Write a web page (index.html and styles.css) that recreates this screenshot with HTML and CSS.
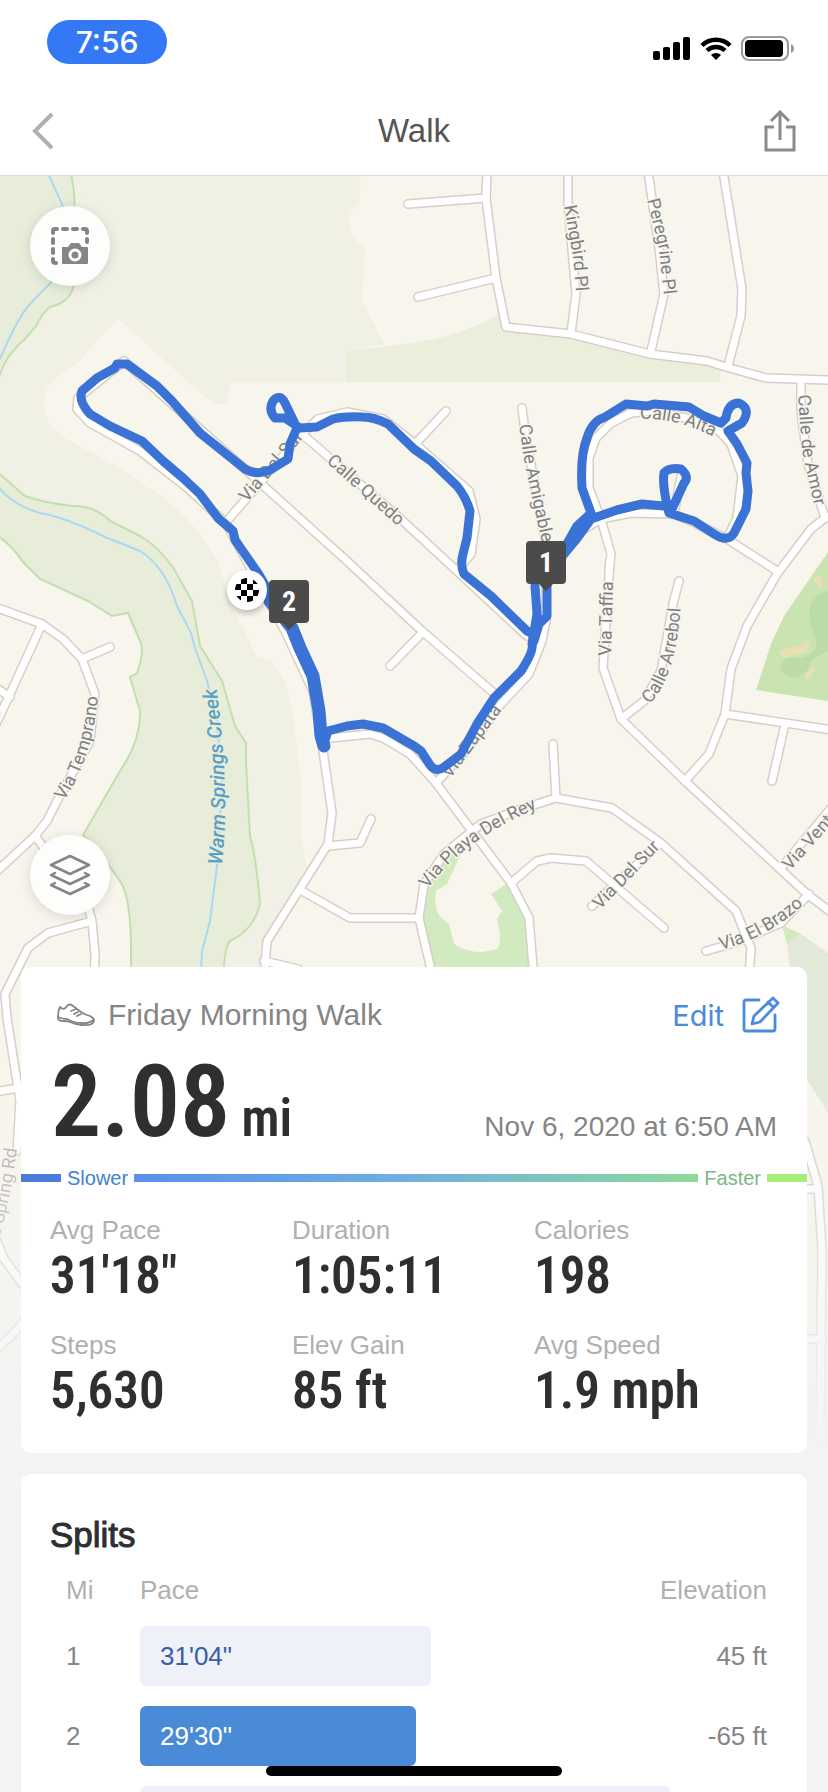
FILE: index.html
```html
<!DOCTYPE html>
<html lang="en">
<head>
  <meta charset="UTF-8" />
  <meta name="viewport" content="width=device-width, initial-scale=1" />
  <title>Walk</title>
  <link rel="stylesheet" href="styles.css">
</head>
<body>
  <div class="screen">
    <header class="topbar">
      <div class="status">
        <span class="clock">7:56</span>
        <div class="status-icons">
          <svg width="38" height="24" viewBox="0 0 38 24">
            <rect x="0" y="14" width="7" height="9" rx="2" />
            <rect x="10" y="10" width="7" height="13" rx="2" />
            <rect x="20" y="5" width="7" height="18" rx="2" />
            <rect x="30" y="0" width="7" height="23" rx="2" />
          </svg>
          <svg width="32" height="24" viewBox="0 0 32 24">
            <path d="M16 23l-5-5a7 7 0 0 1 10 0z" />
            <path d="M7 13.500a13 13 0 0 1 18 0M2 8.500a20 20 0 0 1 28 0" fill="none" stroke="#000" stroke-width="4.500" />
          </svg>
          <svg width="54" height="26" viewBox="0 0 54 26">
            <rect x="1" y="1" width="46" height="23" rx="7" fill="none" stroke="#999" stroke-width="2" />
            <rect x="4" y="4" width="38" height="17" rx="4" />
            <path d="M50 8c4 1 4 8 0 9z" fill="#999" />
          </svg>
        </div>
      </div>
      <nav class="nav">
        <button class="icon-btn" type="button" aria-label="Back">
          <svg width="22" height="38" viewBox="0 0 22 38"><path d="M20 2L3 19l17 17" fill="none" stroke="#b0b0b0" stroke-width="4" /></svg>
        </button>
        <h1>Walk</h1>
        <button class="icon-btn share" type="button" aria-label="Share">
          <svg width="32" height="42" viewBox="0 0 32 42"><path d="M10 17H2v23h28V17h-8M16 30V3M7 11l9-9 9 9" fill="none" stroke="#8a8a8a" stroke-width="3" /></svg>
        </button>
      </nav>
    </header>

    <main class="content">
      <!-- map runs on behind the first card and fades into the page -->
      <svg class="map" viewBox="0 175 828 1300" preserveAspectRatio="xMidYMin slice" aria-label="Route map">
        <defs>
          <linearGradient id="fade" x1="0" y1="0" x2="0" y2="1">
            <stop offset="0" stop-color="#f3f3f3" stop-opacity="0" />
            <stop offset="1" stop-color="#f3f3f3" />
          </linearGradient>
          <g id="roads">
            <path d="M487 170L486 197 496 277 506 326 571 333 650 353 707 360 726 366 766 377 830 379" />
            <path d="M408 203L486 197M418 296L496 277M568 170V203L576 293 571 332M648 170L659 247 664 293 651 350M723 170L742 288 741 315 728 365" />
            <path d="M801 380V410L808 463 825 517 811 528 777 573 747 625 731 668 725 713 709 753 685 780" />
            <path d="M825 517L836 512M777 570L727 538 697 523 674 513 631 512 601 518 581 530 557 557 546 585V620L542 640 529 673 501 703 470 745 436 782" />
            <path d="M609 570L611 553 601 518 589 487V457L596 437 611 422 631 412 654 410 690 418 719 430 731 443 742 475 737 517 727 538M674 513L682 470" />
            <path d="M610 560L603 667 621 718 685 780 807 893 832 912M679 580L673 603 661 670 644 700 621 718" />
            <path d="M725 713L832 729M785 723L772 780M706 950L734 942 781 922 809 893M781 867L832 806" />
            <path d="M553 743L556 797 524 807 481 823 444 853 424 883 419 917 436 990M556 797L612 807 661 842 736 910 751 947 748 990" />
            <path d="M330 737L370 733 383 737 410 753 436 782 511 882 529 917 535 990M511 882L537 860 551 857 586 860 664 927M592 905L659 843" />
            <path d="M419 917L350 917 302 890M313 690L323 750 332 812 328 843 267 940 263 990M328 845L360 842 371 818M264 960L298 968V990" />
            <path d="M313 690L285 630 226 522 185 485 140 450 90 422 77 408 78 397 124 360 247 470 347 560 422 630 496 694M390 665L422 632" />
            <path d="M227 520L302 433 403 520 527 635M302 433L318 418 347 411 383 418 414 442 469 490 476 518 471 553 458 568M446 410L417 441M522 407L526 437 536 490 546 545V600" />
            <path d="M-5 606L42 623 63 638 82 658 95 693 90 740 57 800 47 820 35 835-5 872M82 658L110 646M42 623L10 693-5 725M-5 686L10 696" />
            <path d="M35 835L88 905 92 920 95 953 94 990M92 920L48 932 28 947 5 993 7 1017 20 1100 17 1150M-5 1091L18 1087M-5 1235L4 1258 24 1285M24 1320L14 1332-5 1350" />
            <path d="M805 1140L818 1185 822 1250 820 1440M800 1188H818M800 1338H822" />
          </g>
          <path id="l-kingbird" d="M564 205L573 255 577 300" />
          <path id="l-peregrine" d="M647 199L659 247 665 305" />
          <path id="l-amor" d="M798 394L802 450 820 530" />
          <path id="l-alta" d="M640 418Q680 416 725 442" />
          <path id="l-amigable" d="M519 424L525 465 545 555" />
          <path id="l-quedo" d="M326 461L430 554" />
          <path id="l-sur1" d="M247 502L335 400" />
          <path id="l-taffia" d="M611 655L614 550" />
          <path id="l-arrebol" d="M650 703Q680 670 681 590" />
          <path id="l-zapata" d="M450 778L520 685" />
          <path id="l-playa" d="M428 888Q462 838 545 804" />
          <path id="l-sur2" d="M600 909L680 826" />
          <path id="l-brazo" d="M721 949Q775 935 818 890" />
          <path id="l-ventura" d="M790 870L862 789" />
          <path id="l-temprano" d="M64 800Q100 745 99 665" />
          <path id="l-que" d="M-42 780L25 673" />
          <path id="l-spring" d="M-4 1246Q15 1190 21 1105" />
          <path id="l-creek" d="M222 864Q231 785 214 670" />
        </defs>

        <rect x="0" y="170" width="828" height="1310" fill="#f8f5ec" />
        <path fill="#f0f0e4" d="M0 170H361L359 202Q336 222 365 248L362 300 384 343 346 350V381H231L226 403H214L190 383 118 317 88 350 75 365Q44 378 44 402 43 425 70 440L120 467 145 485Q190 510 218 560L230 603 245 630 257 657 270 660Q288 675 293 715L301 780V837L307 867 267 935 262 980H170V600L0 520z" />
        <path fill="#ebeeda" d="M346 350L414 342Q460 335 499 313L506 328 571 335 650 355 707 362 721 368 720 381H346z" />
        <path fill="#e8edda" d="M0 170H70L74 190V287Q70 295 50 306L25 338 5 363 0 375z" />
        <path fill="#e8edda" stroke="#c2dfae" stroke-width="2" d="M-5 469L25 495Q45 502 72 505 94 504 110 520L140 535Q158 545 174 568L192 600 200 645 222 680 235 725 246 742V762L250 835Q256 855 260 903 254 929 230 940 223 948 223 990H131V940Q130 895 120 880L95 845 83 834 120 770Q141 740 140 710L130 676 137 672Q145 650 140 640L128 612 112 615 88 600 40 578 22 560Q12 544-5 533z" />
        <path fill="none" stroke="#c2dfae" stroke-width="2" d="M70 170Q76 190 74 215V283Q71 301 50 306 43 311 36 325L25 338Q4 355-2 380" />
        <g fill="none" stroke="#a9d8f0" stroke-width="2">
          <path d="M47 170L75 232M60 272L30 303Q18 316 0 358" />
          <path d="M-3 484Q10 503 40 512 65 516 105 536L140 550Q165 565 177 605L191 632 195 647 207 680 217 720 222 780 217 865 210 920 202 950 200 990" />
        </g>
        <path fill="#c9e4b1" d="M828 551L784 615 771 643 756 689 828 700z" />
        <path fill="#bcdca6" d="M828 590Q804 596 811 625L817 643Q814 655 800 657L786 657Q778 663 782 671 794 682 806 672L812 659 828 650z" />
        <path fill="#e8dfb2" d="M778 650L800 644 806 639 810 644 806 652 782 657zM804 674L812 665 816 668 808 679zM813 577L821 575 823 588 817 584z" />
        <path fill="#d1eabf" d="M461 853L448 852 424 884 419 917 433 990H535L529 917 511 880 491 893 502 910 497 918Q503 941 497 948 475 956 454 943L449 923Q432 914 436 890L447 883z" />
        <path fill="#d1eabf" d="M782 924L801 933 787 943z" />
        <path fill="#e3e9d9" d="M790 970L787 943 801 933 828 952V1112L808 1080 792 1060z" />

        <use href="#roads" class="casing" />
        <use href="#roads" class="road" />

        <g class="label">
          <text><textPath href="#l-kingbird">Kingbird Pl</textPath></text>
          <text><textPath href="#l-peregrine">Peregrine Pl</textPath></text>
          <text><textPath href="#l-amor">Calle de Amor</textPath></text>
          <text><textPath href="#l-alta">Calle Alta</textPath></text>
          <text><textPath href="#l-amigable">Calle Amigable</textPath></text>
          <text><textPath href="#l-quedo">Calle Quedo</textPath></text>
          <text><textPath href="#l-sur1">Via Del Sur</textPath></text>
          <text><textPath href="#l-taffia">Via Taffia</textPath></text>
          <text><textPath href="#l-arrebol">Calle Arrebol</textPath></text>
          <text><textPath href="#l-zapata">Via Zapata</textPath></text>
          <text><textPath href="#l-playa">Via Playa Del Rey</textPath></text>
          <text><textPath href="#l-sur2">Via Del Sur</textPath></text>
          <text><textPath href="#l-brazo">Via El Brazo</textPath></text>
          <text><textPath href="#l-ventura">Via Ventura</textPath></text>
          <text><textPath href="#l-temprano">Via Temprano</textPath></text>
          <text><textPath href="#l-que">Via Duque</textPath></text>
          <text opacity=".6"><textPath href="#l-spring">La Spring Rd</textPath></text>
          <text class="water"><textPath href="#l-creek">Warm Springs Creek</textPath></text>
        </g>

        <!-- recorded route -->
        <g class="route">
          <path d="M323 745L328 730 347 725 363 723 383 727 414 745 421 750 430 764Q436 772 444 766L461 753 477 723 494 697 521 670Q534 650 532 643L537 613 535 585" />
          <path d="M547 580V615L539 623 534 640 532 632 527 630 491 595 464 573Q460 565 463 553L467 537 470 510Q466 496 457 485L431 460 414 448 388 423Q374 416 363 416 345 415 333 418L317 426 300 427 285 417 275 417Q268 409 273 400 280 392 285 402L297 427 290 443 288 458 270 469Q257 475 245 468L200 432 172 400 157 385 127 363 117 363 115 367 97 377 82 390Q78 400 90 413L110 425 142 440 163 460 183 477 200 493 218 517 233 530 235 539 258 572 290 627" />
          <path d="M546 575L564 548 577 525 591 512 582 487Q580 455 587 437 592 420 605 416L626 403 647 405 654 403 689 406 704 415 721 422 726 417Q728 402 739 402 752 408 742 422L728 430 737 443 747 462 746 472 748 490 746 508 734 532Q728 542 714 533L694 520 669 512Q662 485 664 472 669 466 681 468 690 476 684 482L672 508 664 505 642 503 617 509 591 518 575 540 546 575" />
          <path class="wide" d="M270 600L292 627 300 647 313 675 319 710 321 735 324 745" />
        </g>

        <circle class="finish" cx="247" cy="589" r="20" />
        <clipPath id="flag"><circle cx="247" cy="589" r="12" /></clipPath>
        <g clip-path="url(#flag)">
          <path d="M241 577h6v6h-6zM253 577h6v6h-6zM235 583h6v6h-6zM247 583h6v6h-6zM241 589h6v6h-6zM253 589h6v6h-6zM235 595h6v6h-6zM247 595h6v6h-6z" />
        </g>
        <g class="marker">
          <path d="M530 540h32a4 4 0 0 1 4 4v35a4 4 0 0 1-4 4h-9l-7 7-7-7h-9a4 4 0 0 1-4-4v-35a4 4 0 0 1 4-4z" />
          <text x="546" y="571">1</text>
          <path d="M273 579h32a4 4 0 0 1 4 4v35a4 4 0 0 1-4 4h-9l-7 7-7-7h-9a4 4 0 0 1-4-4v-35a4 4 0 0 1 4-4z" />
          <text x="289" y="610">2</text>
        </g>
        <rect x="0" y="1080" width="828" height="370" fill="url(#fade)" />
        <rect x="0" y="1449" width="828" height="31" fill="#f3f3f3" />
      </svg>

      <div class="map-tools">
        <button class="round-btn" type="button" aria-label="Map snapshot">
          <svg width="38" height="38" viewBox="0 0 38 38">
            <path d="M2 6V4q0-2 2-2h2M12 2h4M22 2h4M32 2h2q2 0 2 2v2M36 12v3M2 12v4M2 22v4M2 32v2q0 2 3 2" fill="none" stroke="#858585" stroke-width="4" stroke-linecap="round" />
            <path d="M11 20h6l3-4h8l3 4h5q1 0 1 1v15q0 1-1 1H12q-1 0-1-1z" fill="#858585" />
            <circle cx="24" cy="28" r="5" fill="#858585" stroke="#fff" stroke-width="3" />
          </svg>
        </button>
        <button class="round-btn" type="button" aria-label="Map layers">
          <svg width="42" height="42" viewBox="0 0 42 42" fill="none" stroke="#858585" stroke-width="2.500" stroke-linejoin="round" stroke-linecap="round">
            <path d="M21 2l19 9-19 9-19-9z" />
            <path d="M6 19l-4 2 19 9 19-9-4-2M6 29l-4 2 19 9 19-9-4-2" />
          </svg>
        </button>
      </div>

      <section class="card summary">
        <div class="row title-row">
          <svg width="38" height="24" viewBox="0 0 38 24" fill="none" stroke="#858585" stroke-width="1.800" stroke-linecap="round" stroke-linejoin="round">
            <path d="M3 4Q7 8 10 3q3-3 6 0l8 6q3 2 6 3 7 2 7 5 0 6-12 5-6 0-12-3-3-1-7-1-5 0-5-3Q1 8 3 4z" />
            <path d="M1 14q4 2 9 2 7 4 14 4 8 1 12-3M14 8l5-2M17 11l4-2M20 13l4-2" />
          </svg>
          <h2>Friday Morning Walk</h2>
          <button class="edit" type="button">
            Edit
            <svg width="38" height="38" viewBox="0 0 38 38" fill="none" stroke="#4a8bdb" stroke-width="2.800" stroke-linecap="round" stroke-linejoin="round">
              <path d="M17 4H4Q2 4 2 6v27q0 2 2 2h27q2 0 2-2V19" />
              <path d="M10 28l2-8L31 2l5 5-18 19zM26 6l5 5" />
            </svg>
          </button>
        </div>
        <div class="row distance-row">
          <p class="distance">2.08 <small>mi</small></p>
          <time datetime="2020-11-06T06:50">Nov 6, 2020 at 6:50 AM</time>
        </div>
        <div class="legend">
          <i class="bar bar-slow"></i>
          <span class="slower">Slower</span>
          <i class="bar bar-mid"></i>
          <span class="faster">Faster</span>
          <i class="bar bar-fast"></i>
        </div>
        <dl class="stats">
          <div><dt>Avg Pace</dt><dd>31'18"</dd></div>
          <div><dt>Duration</dt><dd>1:05:11</dd></div>
          <div><dt>Calories</dt><dd>198</dd></div>
          <div><dt>Steps</dt><dd>5,630</dd></div>
          <div><dt>Elev Gain</dt><dd>85 ft</dd></div>
          <div><dt>Avg Speed</dt><dd>1.9 mph</dd></div>
        </dl>
      </section>

      <section class="card splits">
        <h2>Splits</h2>
        <table>
          <thead>
            <tr><th class="mi">Mi</th><th>Pace</th><th class="elev">Elevation</th></tr>
          </thead>
          <tbody>
            <tr><td class="mi">1</td><td><div class="pace" style="width: 56%">31'04"</div></td><td class="elev">45 ft</td></tr>
            <tr><td class="mi">2</td><td><div class="pace best" style="width: 53%">29'30"</div></td><td class="elev">-65 ft</td></tr>
            <tr><td class="mi"></td><td><div class="pace" style="width: 102%"></div></td><td class="elev"></td></tr>
          </tbody>
        </table>
      </section>
    </main>
    <div class="home-indicator"></div>
  </div>
</body>
</html>
```

FILE: styles.css
```css
* {
  box-sizing: border-box;
}
body {
  margin: 0;
  background: #f3f3f3;
  font-family: "Liberation Sans", Arial, sans-serif;
  color: #2d2f30;
}
h1, h2, p, dl, dd {
  margin: 0;
  font-weight: normal;
}
button {
  padding: 0;
  border: none;
  background: none;
  font: inherit;
  cursor: pointer;
}
svg {
  display: block;
}
.screen {
  height: 100vh;
  overflow: hidden;
}

/* header */
.topbar {
  background: #fff;
  border-bottom: 1px solid #ddd;
}
.status {
  display: flex;
  justify-content: space-between;
  padding: 20px 33px 0 47px;
}
.clock {
  width: 120px;
  border-radius: 22px;
  background: #3478f6;
  color: #fff;
  font: 500 30px/44px Inter, sans-serif;
  text-align: center;
}
.status-icons {
  display: flex;
  align-items: center;
  gap: 9px;
  padding-top: 14px;
}
.nav {
  display: flex;
  justify-content: space-between;
  align-items: center;
  height: 111px;
  padding: 24px 32px 2px;
}
.nav h1 {
  font-size: 33px;
  color: #555;
}
.icon-btn {
  display: flex;
  width: 40px;
}
.share {
  justify-content: flex-end;
}

/* map */
.content {
  position: relative;
  padding: 0 21px;
}
.map {
  position: absolute;
  top: 0;
  left: 0;
  width: 100%;
  height: 1300px;
}
.casing, .road {
  fill: none;
  stroke: #d6cfc7;
  stroke-width: 10px;
  stroke-linecap: round;
  stroke-linejoin: round;
}
.road {
  stroke: #fff;
  stroke-width: 7px;
}
.label {
  font: 18px Roboto, sans-serif;
  fill: #7d7f82;
  stroke: #f8f5ec;
  stroke-width: 3px;
  paint-order: stroke;
}
.label .water {
  font-size: 20px;
  font-weight: 500;
  font-style: italic;
  fill: #5a9fc4;
  stroke: #e8edda;
}
.route {
  fill: none;
  stroke: #3a72d6;
  stroke-width: 9px;
  stroke-linecap: round;
  stroke-linejoin: round;
}
.route .wide {
  stroke-width: 13px;
}
.finish {
  fill: #fff;
  filter: drop-shadow(0 3px 3px #0004);
}
.marker {
  fill: #4b4b4b;
}
.marker text {
  fill: #fff;
  font: bold 28px "Roboto Condensed", Roboto, sans-serif;
  text-anchor: middle;
}
.map-tools {
  position: relative;
  display: flex;
  flex-direction: column;
  justify-content: space-between;
  height: 791px;
  padding: 30px 9px 52px;
}
.round-btn {
  display: flex;
  justify-content: center;
  align-items: center;
  width: 80px;
  height: 80px;
  border-radius: 50%;
  background: #fdfdfb;
  box-shadow: 0 2px 12px #0002;
}

/* cards */
.card {
  position: relative;
  margin-bottom: 21px;
  border-radius: 10px;
  background: #fff;
}
.row {
  display: flex;
  padding: 0 30px;
}
.title-row {
  align-items: center;
  gap: 13px;
  height: 70px;
  padding: 26px 27px 0 36px;
}
.title-row h2 {
  flex: 1;
  font-size: 30px;
  color: #858585;
}
.edit {
  display: flex;
  align-items: center;
  gap: 18px;
  color: #4a8bdb;
  font: 29px Inter, sans-serif;
}
.distance-row {
  justify-content: space-between;
  align-items: baseline;
  height: 129px;
  padding-top: 22px;
}
.distance {
  font: 600 100px/86px "Roboto Condensed", Roboto, sans-serif;
}
.distance small {
  margin-left: -12px;
  font-size: 51px;
  line-height: 51px;
}
time {
  font-size: 28px;
  color: #858585;
}
.legend {
  display: flex;
  align-items: center;
  gap: 6px;
  height: 24px;
  font-size: 20px;
}
.bar {
  width: 40px;
  height: 8px;
  background: #4a7bd8;
}
.bar-mid {
  flex: 1;
  background: linear-gradient(90deg, #5791e8, #6dade3 45%, #90d99b);
}
.bar-fast {
  background: #a4ee79;
}
.slower {
  color: #4081d5;
}
.faster {
  color: #7bb884;
}
.stats {
  display: grid;
  grid-template-columns: repeat(3, 242px);
  padding: 24px 29px 9px;
}
.stats div {
  height: 115px;
}
.stats dt {
  font-size: 26px;
  line-height: 32px;
  color: #b0b0b0;
}
.stats dd {
  font: 600 51px/60px "Roboto Condensed", Roboto, sans-serif;
}

/* splits */
.splits {
  padding: 40px 40px 40px 29px;
}
.splits h2 {
  font-size: 35px;
  line-height: 42px;
  -webkit-text-stroke: 1px #2d2f30;
}
table {
  width: 100%;
  border-collapse: collapse;
  font-size: 26px;
  color: #858585;
}
th {
  height: 60px;
  padding: 8px 0 0;
  font-weight: normal;
  text-align: left;
  color: #b0b0b0;
}
td {
  height: 80px;
  padding: 0;
}
.mi {
  width: 90px;
  padding-left: 16px;
}
.elev {
  width: 96px;
  text-align: right;
}
.pace {
  height: 60px;
  padding-left: 20px;
  border-radius: 6px;
  background: #eef1f7;
  color: #3a5ba8;
  line-height: 60px;
}
.pace.best {
  background: #4a8bd8;
  color: #fff;
}
.home-indicator {
  position: fixed;
  bottom: 16px;
  left: 50%;
  width: 296px;
  height: 10px;
  margin-left: -148px;
  border-radius: 5px;
  background: #000;
}
```
